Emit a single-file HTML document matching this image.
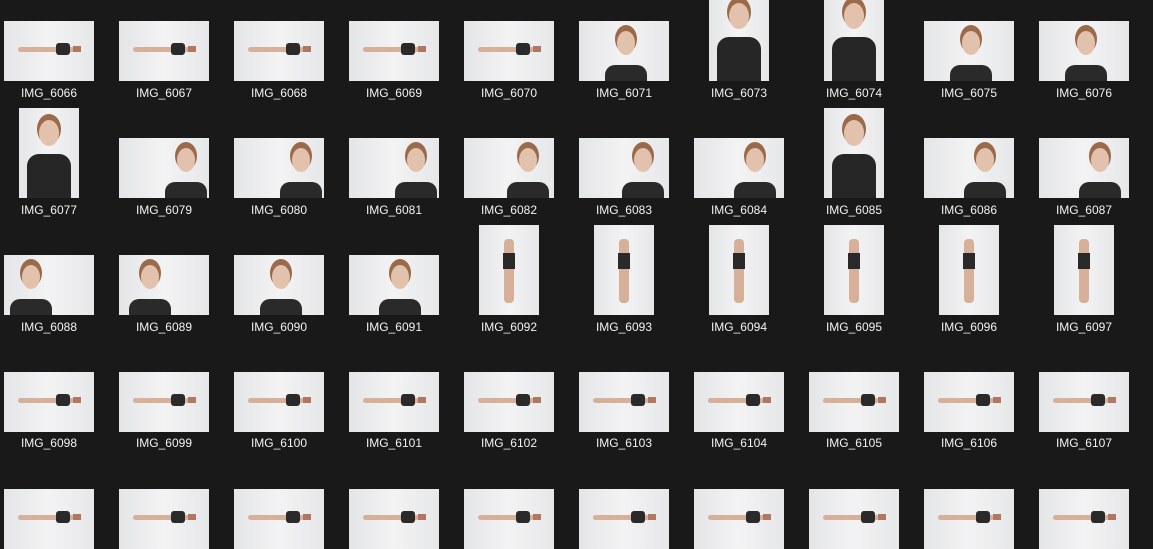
<!DOCTYPE html>
<html><head><meta charset="utf-8"><style>
html,body{margin:0;padding:0;background:#191919;width:1153px;height:549px;overflow:hidden;position:relative;font-family:"Liberation Sans",sans-serif}
.t{position:absolute;width:90px;height:60px;background:linear-gradient(90deg,#e4e5e7,#f3f3f4 50%,#e6e7e9);overflow:hidden}
.p{width:60px;height:90px}
.l{position:absolute;width:110px;text-align:center;color:#f2f2f2;font-size:12px;line-height:14px}
.lie::before{content:"";position:absolute;left:14px;top:26px;width:56px;height:5px;background:#d7b09a;border-radius:3px}
.lie::after{content:"";position:absolute;left:52px;top:22px;width:14px;height:12px;background:#2a2a2a;border-radius:3px;box-shadow:14px 0 0 -3px #b07860}
.hd::before{content:"";position:absolute;left:var(--fx,38px);top:10px;width:18px;height:24px;background:#e3c2ad;border-radius:50%;box-shadow:0 -4px 0 2px #9a6a4a}
.hd::after{content:"";position:absolute;left:calc(var(--fx,38px) - 12px);top:44px;width:42px;height:20px;background:#2a2a2a;border-radius:10px 10px 0 0}
.ph::before{content:"";position:absolute;left:20px;top:12px;width:20px;height:26px;background:#e3c2ad;border-radius:50%;box-shadow:0 -4px 0 2px #9a6a4a}
.ph::after{content:"";position:absolute;left:8px;top:46px;width:44px;height:44px;background:#262626;border-radius:12px 12px 0 0}
.fb::before{content:"";position:absolute;left:25px;top:14px;width:10px;height:64px;background:#d7b09a;border-radius:4px}
.fb::after{content:"";position:absolute;left:24px;top:28px;width:12px;height:16px;background:#2a2a2a}
</style></head><body>
<!-- row1 -->
<div class="t lie" style="left:4px;top:21px"></div><div class="l" style="left:-6px;top:86px">IMG_6066</div>
<div class="t lie" style="left:119px;top:21px"></div><div class="l" style="left:109px;top:86px">IMG_6067</div>
<div class="t lie" style="left:234px;top:21px"></div><div class="l" style="left:224px;top:86px">IMG_6068</div>
<div class="t lie" style="left:349px;top:21px"></div><div class="l" style="left:339px;top:86px">IMG_6069</div>
<div class="t lie" style="left:464px;top:21px"></div><div class="l" style="left:454px;top:86px">IMG_6070</div>
<div class="t hd" style="left:579px;top:21px"></div><div class="l" style="left:569px;top:86px">IMG_6071</div>
<div class="t p ph" style="left:709px;top:-9px"></div><div class="l" style="left:684px;top:86px">IMG_6073</div>
<div class="t p ph" style="left:824px;top:-9px"></div><div class="l" style="left:799px;top:86px">IMG_6074</div>
<div class="t hd" style="left:924px;top:21px"></div><div class="l" style="left:914px;top:86px">IMG_6075</div>
<div class="t hd" style="left:1039px;top:21px"></div><div class="l" style="left:1029px;top:86px">IMG_6076</div>
<!-- row2 -->
<div class="t p ph" style="left:19px;top:108px"></div><div class="l" style="left:-6px;top:203px">IMG_6077</div>
<div class="t hd" style="left:119px;top:138px;--fx:58px"></div><div class="l" style="left:109px;top:203px">IMG_6079</div>
<div class="t hd" style="left:234px;top:138px;--fx:58px"></div><div class="l" style="left:224px;top:203px">IMG_6080</div>
<div class="t hd" style="left:349px;top:138px;--fx:58px"></div><div class="l" style="left:339px;top:203px">IMG_6081</div>
<div class="t hd" style="left:464px;top:138px;--fx:55px"></div><div class="l" style="left:454px;top:203px">IMG_6082</div>
<div class="t hd" style="left:579px;top:138px;--fx:55px"></div><div class="l" style="left:569px;top:203px">IMG_6083</div>
<div class="t hd" style="left:694px;top:138px;--fx:52px"></div><div class="l" style="left:684px;top:203px">IMG_6084</div>
<div class="t p ph" style="left:824px;top:108px"></div><div class="l" style="left:799px;top:203px">IMG_6085</div>
<div class="t hd" style="left:924px;top:138px;--fx:52px"></div><div class="l" style="left:914px;top:203px">IMG_6086</div>
<div class="t hd" style="left:1039px;top:138px;--fx:52px"></div><div class="l" style="left:1029px;top:203px">IMG_6087</div>
<!-- row3 -->
<div class="t hd" style="left:4px;top:255px;--fx:18px"></div><div class="l" style="left:-6px;top:320px">IMG_6088</div>
<div class="t hd" style="left:119px;top:255px;--fx:22px"></div><div class="l" style="left:109px;top:320px">IMG_6089</div>
<div class="t hd" style="left:234px;top:255px"></div><div class="l" style="left:224px;top:320px">IMG_6090</div>
<div class="t hd" style="left:349px;top:255px;--fx:42px"></div><div class="l" style="left:339px;top:320px">IMG_6091</div>
<div class="t p fb" style="left:479px;top:225px"></div><div class="l" style="left:454px;top:320px">IMG_6092</div>
<div class="t p fb" style="left:594px;top:225px"></div><div class="l" style="left:569px;top:320px">IMG_6093</div>
<div class="t p fb" style="left:709px;top:225px"></div><div class="l" style="left:684px;top:320px">IMG_6094</div>
<div class="t p fb" style="left:824px;top:225px"></div><div class="l" style="left:799px;top:320px">IMG_6095</div>
<div class="t p fb" style="left:939px;top:225px"></div><div class="l" style="left:914px;top:320px">IMG_6096</div>
<div class="t p fb" style="left:1054px;top:225px"></div><div class="l" style="left:1029px;top:320px">IMG_6097</div>
<!-- row4 -->
<div class="t lie" style="left:4px;top:372px"></div><div class="l" style="left:-6px;top:436px">IMG_6098</div>
<div class="t lie" style="left:119px;top:372px"></div><div class="l" style="left:109px;top:436px">IMG_6099</div>
<div class="t lie" style="left:234px;top:372px"></div><div class="l" style="left:224px;top:436px">IMG_6100</div>
<div class="t lie" style="left:349px;top:372px"></div><div class="l" style="left:339px;top:436px">IMG_6101</div>
<div class="t lie" style="left:464px;top:372px"></div><div class="l" style="left:454px;top:436px">IMG_6102</div>
<div class="t lie" style="left:579px;top:372px"></div><div class="l" style="left:569px;top:436px">IMG_6103</div>
<div class="t lie" style="left:694px;top:372px"></div><div class="l" style="left:684px;top:436px">IMG_6104</div>
<div class="t lie" style="left:809px;top:372px"></div><div class="l" style="left:799px;top:436px">IMG_6105</div>
<div class="t lie" style="left:924px;top:372px"></div><div class="l" style="left:914px;top:436px">IMG_6106</div>
<div class="t lie" style="left:1039px;top:372px"></div><div class="l" style="left:1029px;top:436px">IMG_6107</div>
<!-- row5 -->
<div class="t lie" style="left:4px;top:489px"></div>
<div class="t lie" style="left:119px;top:489px"></div>
<div class="t lie" style="left:234px;top:489px"></div>
<div class="t lie" style="left:349px;top:489px"></div>
<div class="t lie" style="left:464px;top:489px"></div>
<div class="t lie" style="left:579px;top:489px"></div>
<div class="t lie" style="left:694px;top:489px"></div>
<div class="t lie" style="left:809px;top:489px"></div>
<div class="t lie" style="left:924px;top:489px"></div>
<div class="t lie" style="left:1039px;top:489px"></div>
</body></html>
